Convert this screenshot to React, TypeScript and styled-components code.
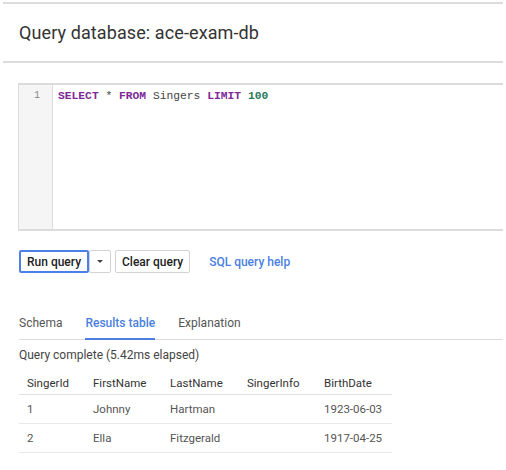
import React from "react";
import styled, { createGlobalStyle } from "styled-components";

const Global = createGlobalStyle`
  html, body { margin: 0; padding: 0; background: #fff; }
  body { font-family: Roboto, "Noto Sans", Arial, sans-serif; color: #333; }
`;

const Page = styled.div`
  width: 500px;
  padding: 0 3px;
  display: flex;
  flex-direction: column;
`;

const Header = styled.header`
  margin-top: 2px;
  border-top: 2px solid #dcdcdc;
  border-bottom: 2px solid #dcdcdc;
  height: 57px;
  display: flex;
  align-items: center;
  padding-left: 16px;
`;

const Title = styled.h1`
  margin: 0;
  font-size: 18px;
  font-weight: 400;
  color: #333;
  letter-spacing: 0.1px;
`;

const Body = styled.div`
  display: flex;
  flex-direction: column;
  padding-left: 15px;
`;

const Editor = styled.div`
  margin-top: 20px;
  height: 144px;
  border-top: 2px solid #dcdcdc;
  border-bottom: 2px solid #dcdcdc;
  border-left: 1px solid #dcdcdc;
  display: flex;
`;

const Gutter = styled.div`
  width: 34px;
  background: #f5f5f5;
  border-right: 1px solid #dcdcdc;
  font-family: "Liberation Mono", monospace;
  font-size: 10px;
  color: #888;
  text-align: right;
  padding: 4px 12px 0 0;
  box-sizing: border-box;
  line-height: 14px;
`;

const Code = styled.div`
  padding: 3px 0 0 5px;
  font-family: "Liberation Mono", "Courier New", monospace;
  font-size: 11.3px;
  font-weight: 700;
  line-height: 16px;
  color: #444;
`;

const Tok = styled.span<{ $kind: "kw" | "num" | "plain" }>`
  color: ${(p) => (p.$kind === "kw" ? "#7d2a97" : p.$kind === "num" ? "#2a7a5a" : "#444")};
  font-weight: ${(p) => (p.$kind === "plain" ? 400 : 700)};
`;

const Actions = styled.div`
  margin-top: 19px;
  margin-left: 1px;
  display: flex;
  align-items: center;
`;

const Button = styled.button<{ $primary?: boolean; $narrow?: boolean }>`
  height: 23px;
  box-sizing: border-box;
  padding: ${(p) => (p.$narrow ? "0" : "0 6px")};
  width: ${(p) => (p.$narrow ? "22px" : "auto")};
  background: #fff;
  border: ${(p) => (p.$primary ? "2px solid #4a80e8" : "1px solid #d2d2d2")};
  border-radius: 2px;
  font-family: Roboto, Arial, sans-serif;
  font-size: 12px;
  font-weight: 500;
  color: #222;
  display: flex;
  align-items: center;
  justify-content: center;
  margin-right: ${(p) => (p.$narrow ? "4px" : "0")};
`;

const Caret = styled.span`
  width: 0;
  height: 0;
  border-left: 3px solid transparent;
  border-right: 3px solid transparent;
  border-top: 3px solid #444;
`;

const HelpLink = styled.a`
  margin-left: 19px;
  font-size: 12px;
  font-weight: 500;
  color: #4a7fe0;
  text-decoration: none;
`;

const Tabs = styled.div`
  margin-top: 39px;
  margin-left: 1px;
  display: flex;
  border-bottom: 1px solid #dcdcdc;
`;

const Tab = styled.div<{ $active?: boolean }>`
  font-size: 12px;
  color: ${(p) => (p.$active ? "#4a7fe0" : "#555")};
  font-weight: ${(p) => (p.$active ? 500 : 400)};
  padding: 4px 0 8px;
  margin-right: 23px;
  border-bottom: 2px solid ${(p) => (p.$active ? "#4a7fe0" : "transparent")};
  margin-bottom: -1px;
`;

const Status = styled.div`
  margin-top: 8px;
  margin-left: 1px;
  font-size: 12px;
  color: #444;
`;

const Table = styled.table`
  margin-top: 14px;
  margin-left: 1px;
  width: 373px;
  border-collapse: collapse;
  font-size: 11.5px;
`;

const Th = styled.th<{ $w: number }>`
  width: ${(p) => p.$w}px;
  text-align: left;
  font-weight: 400;
  color: #333;
  padding: 0 0 4px 8px;
  border-bottom: 1px solid #e2e2e2;
  box-sizing: border-box;
`;

const Td = styled.td`
  padding: 0 0 0 8px;
  height: 28px;
  color: #555;
  border-bottom: 1px solid #e8e8e8;
`;

const cols = [
  { name: "SingerId", w: 66 },
  { name: "FirstName", w: 77 },
  { name: "LastName", w: 77 },
  { name: "SingerInfo", w: 77 },
  { name: "BirthDate", w: 76 },
];

const rows = [
  ["1", "Johnny", "Hartman", "", "1923-06-03"],
  ["2", "Ella", "Fitzgerald", "", "1917-04-25"],
];

export default function App() {
  return (
    <>
      <Global />
      <Page>
        <Header>
          <Title>Query database: ace-exam-db</Title>
        </Header>
        <Body>
          <Editor>
            <Gutter>1</Gutter>
            <Code>
              <Tok $kind="kw">SELECT</Tok> <Tok $kind="plain">*</Tok>{" "}
              <Tok $kind="kw">FROM</Tok> <Tok $kind="plain">Singers</Tok>{" "}
              <Tok $kind="kw">LIMIT</Tok> <Tok $kind="num">100</Tok>
            </Code>
          </Editor>
          <Actions>
            <Button $primary>Run query</Button>
            <Button $narrow>
              <Caret />
            </Button>
            <Button>Clear query</Button>
            <HelpLink href="#">SQL query help</HelpLink>
          </Actions>
          <Tabs>
            <Tab>Schema</Tab>
            <Tab $active>Results table</Tab>
            <Tab>Explanation</Tab>
          </Tabs>
          <Status>Query complete (5.42ms elapsed)</Status>
          <Table>
            <thead>
              <tr>
                {cols.map((c) => (
                  <Th key={c.name} $w={c.w}>
                    {c.name}
                  </Th>
                ))}
              </tr>
            </thead>
            <tbody>
              {rows.map((r) => (
                <tr key={r[0]}>
                  {r.map((v, i) => (
                    <Td key={i}>{v}</Td>
                  ))}
                </tr>
              ))}
            </tbody>
          </Table>
        </Body>
      </Page>
    </>
  );
}
